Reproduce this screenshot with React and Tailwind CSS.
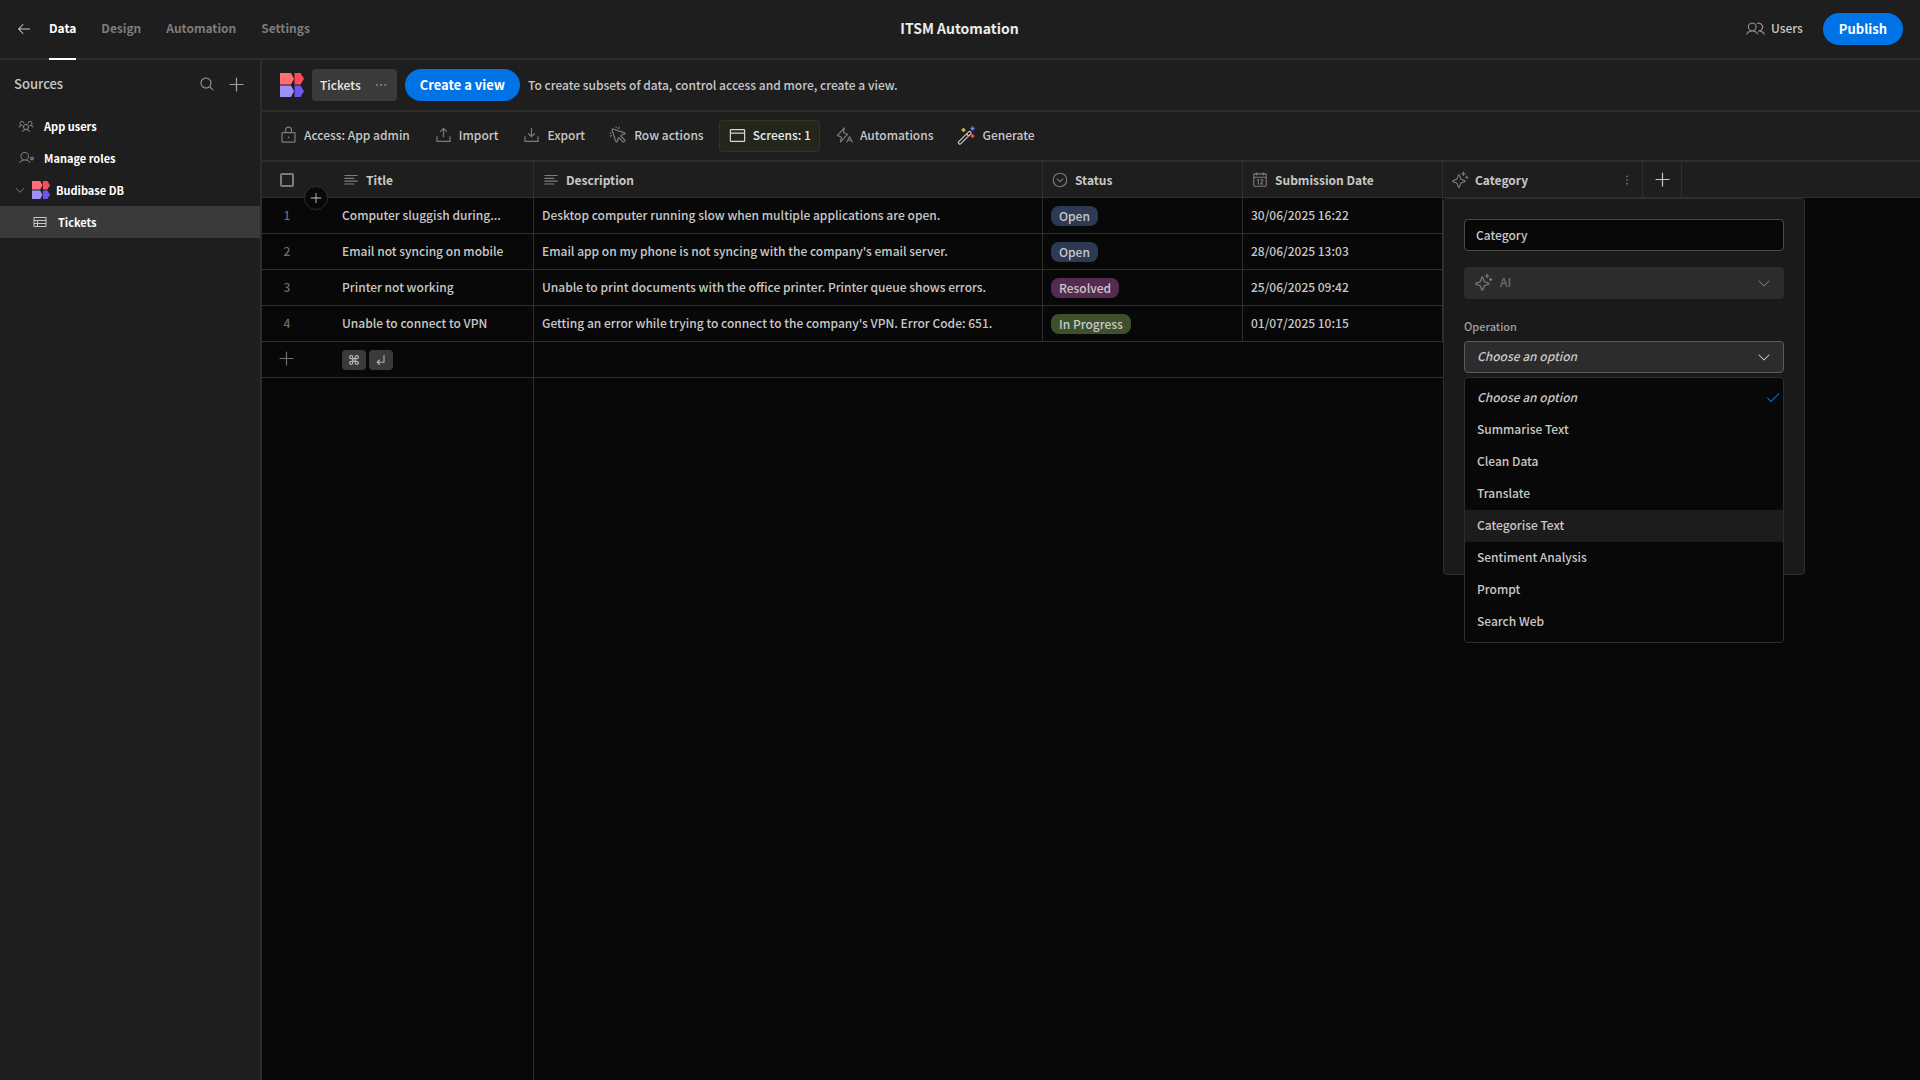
import { useState } from 'react'
import {
  PiArrowElbowDownLeftBold,
  PiArrowLeft,
  PiBrowser,
  PiCalendar,
  PiCaretCircleDown,
  PiCaretDown,
  PiCheck,
  PiCommandBold,
  PiCursorClick,
  PiDotsThreeBold,
  PiDotsThreeVerticalBold,
  PiDownloadSimple,
  PiLightningA,
  PiLock,
  PiMagnifyingGlass,
  PiPlus,
  PiSparkle,
  PiTable,
  PiTextAlignLeft,
  PiUploadSimple,
  PiUserGear,
  PiUsers,
  PiUsersThree,
} from 'react-icons/pi'

const tabs = ['Data', 'Design', 'Automation', 'Settings']

const rows = [
  { title: 'Computer sluggish during...', description: 'Desktop computer running slow when multiple applications are open.', status: 'Open', date: '30/06/2025 16:22' },
  { title: 'Email not syncing on mobile', description: "Email app on my phone is not syncing with the company's email server.", status: 'Open', date: '28/06/2025 13:03' },
  { title: 'Printer not working', description: 'Unable to print documents with the office printer. Printer queue shows errors.', status: 'Resolved', date: '25/06/2025 09:42' },
  { title: 'Unable to connect to VPN', description: "Getting an error while trying to connect to the company's VPN. Error Code: 651.", status: 'In Progress', date: '01/07/2025 10:15' },
]

const statusColors = {
  Open: 'bg-[#2c3a55]',
  Resolved: 'bg-[#552c50]',
  'In Progress': 'bg-[#3f512c]',
}

const operations = [
  'Choose an option',
  'Summarise Text',
  'Clean Data',
  'Translate',
  'Categorise Text',
  'Sentiment Analysis',
  'Prompt',
  'Search Web',
]

function Logo({ className }) {
  return (
    <svg className={className} viewBox="0 0 24 24">
      <path fill="#ff6f75" d="M0 0h11l3 5.700L11 11.400H0z" />
      <path fill="#ff4a59" d="M14.500 0H20.500L24 5.700 20.500 11.400H14.500z" />
      <path fill="#9f8ff8" d="M0 12.600h11l3 5.700L11 24H0z" />
      <path fill="#6a57f0" d="M14.500 12.600H20.500L24 18.300 20.500 24H14.500z" />
    </svg>
  )
}

function WandIcon() {
  return (
    <svg className="h-[19px] w-[19px]" viewBox="0 0 19 19" fill="none" strokeWidth="1.200">
      <path
        stroke="#c8c8c8"
        strokeLinejoin="round"
        d="M1.800 15.600 11.600 5.800a1.300 1.300 0 0 1 1.800 0l.3.3a1.300 1.300 0 0 1 0 1.800L3.900 17.700a1.300 1.300 0 0 1-1.800 0l-.3-.3a1.300 1.300 0 0 1 0-1.800zM9.500 7.900l2.100 2.100"
      />
      <path stroke="#e3b341" strokeWidth="1.600" d="M6.500 2v4M4.500 4h4" />
      <path stroke="#6f8cff" strokeWidth="1.600" d="M15.500.500v4M13.500 2.500h4" />
      <path stroke="#f0524f" strokeWidth="1.600" d="M15.500 8v4M13.500 10h4" />
    </svg>
  )
}

function TopBar() {
  return (
    <header className="flex h-[60px] items-stretch border-b-2 border-[#2c2c2c]">
      <div className="flex flex-1 items-stretch pl-4">
        <button type="button" aria-label="Back" className="mr-[17px] text-[#c8c8c8]">
          <PiArrowLeft className="h-4 w-4" />
        </button>
        <nav className="-mb-0.5 flex gap-[25px]">
          {tabs.map((tab, i) => (
            <a
              key={tab}
              href="#"
              className={`flex items-center border-b-2 pb-0.5 font-bold ${i === 0 ? 'border-white text-white' : 'border-transparent text-[#7c7c7c]'}`}
            >
              {tab}
            </a>
          ))}
        </nav>
      </div>
      <h1 className="flex items-center pb-0.5 text-sm font-bold text-[#ebebeb]">ITSM Automation</h1>
      <div className="flex flex-1 items-center justify-end gap-5 pr-[17px]">
        <button type="button" className="flex items-center gap-1.5 pb-0.5 text-[#c8c8c8]">
          <PiUsers className="h-[19px] w-[19px] text-[#8a8a8a]" />
          Users
        </button>
        <button type="button" className="h-8 rounded-full bg-[#0073e6] px-4 text-[13px] font-bold text-white">Publish</button>
      </div>
    </header>
  )
}

function Sidebar() {
  return (
    <aside className="w-[262px] shrink-0 border-r-2 border-[#2c2c2c] text-[11px] font-bold text-white">
      <div className="flex h-[50px] items-center px-3.5 pb-0.5">
        <h2 className="flex-1 text-[13px] font-medium text-[#c8c8c8]">Sources</h2>
        <button type="button" aria-label="Search" className="mr-3 text-[#a0a0a0]">
          <PiMagnifyingGlass className="h-4 w-4" />
        </button>
        <button type="button" aria-label="Add source" className="text-[#a0a0a0]">
          <PiPlus className="h-[19px] w-[19px]" />
        </button>
      </div>
      <a href="#" className="flex h-8 items-center gap-2.5 pl-[18px]">
        <PiUsersThree className="h-4 w-4 text-[#7c7c7c]" />
        App users
      </a>
      <a href="#" className="flex h-8 items-center gap-2.5 pl-[18px]">
        <PiUserGear className="h-4 w-4 text-[#7c7c7c]" />
        Manage roles
      </a>
      <a href="#" className="flex h-8 items-center gap-1.5 pl-3.5">
        <PiCaretDown className="h-3 w-3 text-[#7c7c7c]" />
        <Logo className="h-[18px] w-[18px]" />
        Budibase DB
      </a>
      <a href="#" className="flex h-8 items-center gap-2.5 bg-[#3a3a3a] pl-8">
        <PiTable className="h-4 w-4 text-[#c8c8c8]" />
        Tickets
      </a>
    </aside>
  )
}

function ToolButton({ icon: Icon, children, active }) {
  return (
    <button
      type="button"
      className={`flex h-8 items-center gap-1.5 rounded-sm border px-2 pb-0.5 ${active ? 'border-[#2f371a] bg-[#22261b] text-[#ebebeb]' : 'border-transparent text-[#c8c8c8]'}`}
    >
      <Icon className={`h-[19px] w-[19px] ${active ? 'text-[#d8d8d8]' : 'text-[#7c7c7c]'}`} />
      {children}
    </button>
  )
}

function ColumnHead({ icon: Icon, children }) {
  return (
    <div className="flex items-center gap-1.5 pl-2">
      <Icon className="h-[18px] w-[18px] text-[#7c7c7c]" />
      {children}
    </div>
  )
}

function ColumnEditor() {
  const [name, setName] = useState('Category')
  const [operation, setOperation] = useState('Choose an option')

  return (
    <div className="absolute left-0 top-full z-10 mt-px h-[377px] w-[362px] rounded border border-[#2f2f2f] bg-[#1a1a1a] p-5 font-medium text-[#c8c8c8]">
      <input
        type="text"
        aria-label="Column name"
        value={name}
        onChange={(event) => setName(event.target.value)}
        className="block h-8 w-full rounded border border-[#4a4a4a] bg-[#080808] px-[11px] pb-0.5"
      />
      <div className="relative mt-4">
        <select aria-label="Type" disabled className="block h-8 w-full appearance-none rounded bg-[#2c2c2c] pb-0.5 pl-9 text-[#6e6e6e] opacity-100">
          <option>AI</option>
        </select>
        <PiSparkle className="absolute left-2.5 top-1.5 h-[19px] w-[19px] text-[#7c7c7c]" />
        <PiCaretDown className="absolute right-3 top-2 h-4 w-4 text-[#7c7c7c]" />
      </div>
      <label htmlFor="operation" className="mb-1.5 mt-4 block pt-0.5 text-[11px] leading-[18px] text-[#a0a0a0]">Operation</label>
      <div className="relative">
        <select
          id="operation"
          value={operation}
          onChange={(event) => setOperation(event.target.value)}
          className="block h-8 w-full appearance-none rounded border border-[#5a5a5a] bg-[#2c2c2c] px-3 pb-0.5 italic"
        >
          {operations.map((item) => <option key={item}>{item}</option>)}
        </select>
        <PiCaretDown className="absolute right-3 top-2 h-4 w-4 text-[#c8c8c8]" />
        <ul role="listbox" className="absolute inset-x-0 top-9 rounded border border-[#2f2f2f] bg-[#080808] py-1">
          {operations.map((item) => (
            <li
              key={item}
              role="option"
              aria-selected={item === operation}
              onClick={() => setOperation(item)}
              className={`flex h-8 items-center justify-between pb-0.5 pl-3 pr-0.5 ${item === 'Categorise Text' ? 'bg-[#1c1c1c]' : ''} ${item === 'Choose an option' ? 'italic' : ''}`}
            >
              {item}
              {item === operation && <PiCheck className="h-4 w-4 text-[#0d7fe0]" />}
            </li>
          ))}
        </ul>
      </div>
    </div>
  )
}

function Grid() {
  const head = 'border-b border-r border-[#2f2f2f] p-0 text-left font-bold'
  const cell = 'truncate border-b border-r border-[#2f2f2f] px-2 pt-0'

  return (
    <table className="w-full table-fixed border-separate border-spacing-0 text-[#c8c8c8]">
      <colgroup>
        <col className="w-[72px]" />
        <col className="w-[200px]" />
        <col className="w-[509px]" />
        <col className="w-[200px]" />
        <col className="w-[200px]" />
        <col className="w-[200px]" />
        <col className="w-[39px]" />
        <col />
      </colgroup>
      <thead>
        <tr className="h-9 bg-[#1e1e1e]">
          <th className="relative border-b border-[#2f2f2f] p-0">
            <input type="checkbox" aria-label="Select all rows" className="ml-[18px] block h-3.5 w-3.5 appearance-none rounded-xs border-2 border-[#7c7c7c]" />
            <button type="button" aria-label="Insert row" className="absolute -bottom-[13px] right-1.5 flex h-6 w-6 items-center justify-center rounded-full border border-[#2f2f2f] bg-[#080808]">
              <PiPlus className="h-3.5 w-3.5" />
            </button>
          </th>
          <th className={head}><ColumnHead icon={PiTextAlignLeft}>Title</ColumnHead></th>
          <th className={head}><ColumnHead icon={PiTextAlignLeft}>Description</ColumnHead></th>
          <th className={head}><ColumnHead icon={PiCaretCircleDown}>Status</ColumnHead></th>
          <th className={head}><ColumnHead icon={PiCalendar}>Submission Date</ColumnHead></th>
          <th className={`relative ${head}`}>
            <div className="flex items-center justify-between pr-2">
              <ColumnHead icon={PiSparkle}>Category</ColumnHead>
              <button type="button" aria-label="Column options"><PiDotsThreeVerticalBold className="h-3.5 w-3.5 text-[#7c7c7c]" /></button>
            </div>
            <ColumnEditor />
          </th>
          <th className={head}>
            <button type="button" aria-label="Add column" className="mx-auto block"><PiPlus className="h-[19px] w-[19px]" /></button>
          </th>
          <th className="border-b border-[#2f2f2f]" />
        </tr>
      </thead>
      <tbody className="font-medium">
        {rows.map((row, i) => (
          <tr key={row.title} className="h-9">
            <td className="border-b border-[#2f2f2f] pb-0.5 pl-0 pr-[22px] pt-0 text-center text-[#6e6e6e]">{i + 1}</td>
            <td className={`${cell} pb-0.5`}>{row.title}</td>
            <td className={`${cell} pb-0.5`}>{row.description}</td>
            <td className={`${cell} pb-0`}>
              <span className={`inline-block h-5 rounded-lg px-2 align-middle leading-5 ${statusColors[row.status]}`}>{row.status}</span>
            </td>
            <td className={`${cell} pb-0.5`}>{row.date}</td>
            <td className={`${cell} pb-0`} />
          </tr>
        ))}
        <tr className="h-9">
          <td className="border-b border-[#2f2f2f] px-0 pb-0.5 pt-0">
            <button type="button" aria-label="Add row" className="ml-[15px] block"><PiPlus className="h-[19px] w-[19px] text-[#6e6e6e]" /></button>
          </td>
          <td className={`${cell} pb-0`}>
            <div className="flex gap-[3px] text-[#b0b0b0]">
              <kbd className="flex h-5 w-6 items-center justify-center rounded-sm bg-[#3a3a3a]"><PiCommandBold className="h-3.5 w-3.5" /></kbd>
              <kbd className="flex h-5 w-6 items-center justify-center rounded-sm bg-[#3a3a3a]"><PiArrowElbowDownLeftBold className="h-3 w-3" /></kbd>
            </div>
          </td>
          <td colSpan={4} className="border-b border-[#2f2f2f] p-0" />
        </tr>
      </tbody>
    </table>
  )
}

function App() {
  return (
    <div className="flex min-h-screen flex-col bg-[#1e1e1e] font-['Noto_Sans_CJK_SC',sans-serif] text-xs leading-5 font-medium">
      <TopBar />
      <div className="flex flex-1">
        <Sidebar />
        <main className="flex min-w-0 flex-1 flex-col">
          <div className="flex h-[52px] items-center gap-2 border-b-2 border-[#2c2c2c] pl-[18px] text-[#c8c8c8]">
            <Logo className="h-6 w-6" />
            <div className="flex h-8 items-center gap-3 rounded bg-[#3a3a3a] px-2 text-[#ebebeb]">
              Tickets
              <button type="button" aria-label="Table options"><PiDotsThreeBold className="h-4 w-4 text-[#8a8a8a]" /></button>
            </div>
            <button type="button" className="h-8 rounded-full bg-[#0073e6] px-[15px] text-[13px] font-bold text-white">Create a view</button>
            <p>To create subsets of data, control access and more, create a view.</p>
          </div>
          <div className="flex h-[50px] items-center gap-1.5 border-b-2 border-[#2c2c2c] pl-2">
            <ToolButton icon={PiLock}>Access: App admin</ToolButton>
            <ToolButton icon={PiUploadSimple}>Import</ToolButton>
            <ToolButton icon={PiDownloadSimple}>Export</ToolButton>
            <ToolButton icon={PiCursorClick}>Row actions</ToolButton>
            <ToolButton icon={PiBrowser} active>Screens: 1</ToolButton>
            <ToolButton icon={PiLightningA}>Automations</ToolButton>
            <ToolButton icon={WandIcon}>Generate</ToolButton>
          </div>
          <div className="flex flex-1 flex-col bg-[#080808]">
            <Grid />
            <div className="w-[272px] flex-1 border-r border-[#2f2f2f]" />
          </div>
        </main>
      </div>
    </div>
  )
}

export default App
